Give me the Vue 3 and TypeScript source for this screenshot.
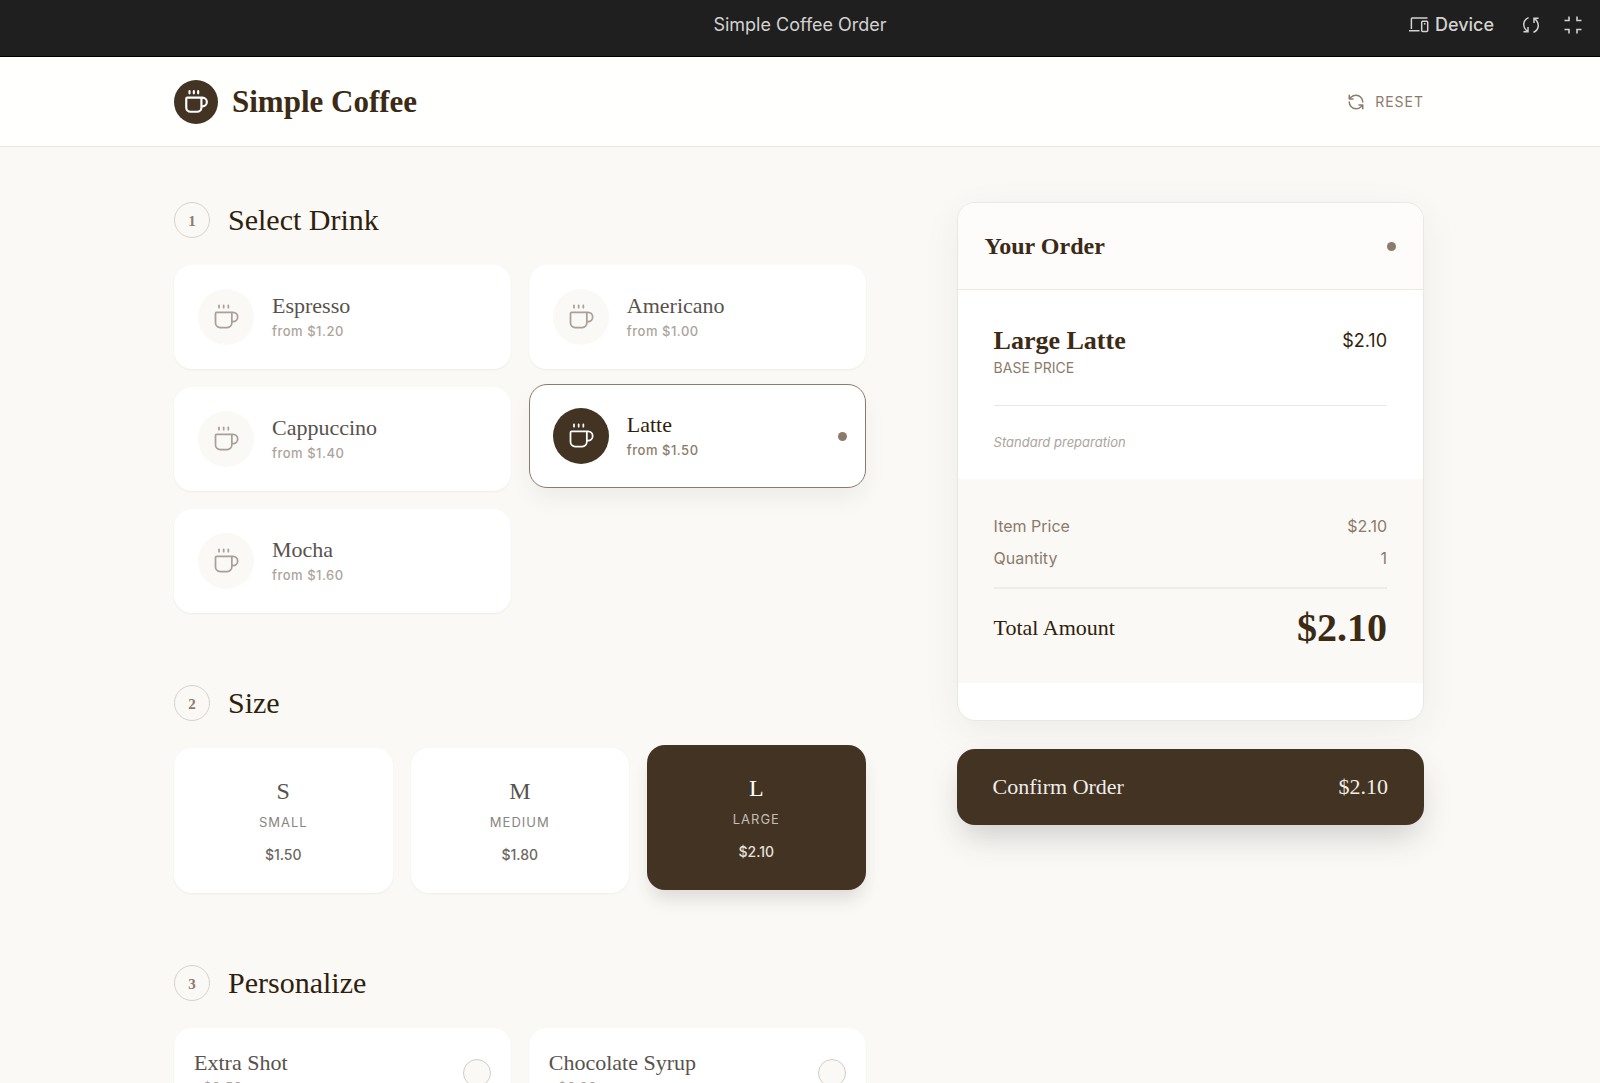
<script setup lang="ts">
import { computed, ref } from 'vue'

interface Drink { name: string; base: number }
interface Size { code: string; label: string; extra: number }
interface Extra { name: string; price: number }

const drinks: Drink[] = [
  { name: 'Espresso', base: 1.2 },
  { name: 'Americano', base: 1.0 },
  { name: 'Cappuccino', base: 1.4 },
  { name: 'Latte', base: 1.5 },
  { name: 'Mocha', base: 1.6 },
]
const sizes: Size[] = [
  { code: 'S', label: 'Small', extra: 0 },
  { code: 'M', label: 'Medium', extra: 0.3 },
  { code: 'L', label: 'Large', extra: 0.6 },
]
const extras: Extra[] = [
  { name: 'Extra Shot', price: 0.5 },
  { name: 'Chocolate Syrup', price: 0.3 },
]

const drink = ref<Drink>(drinks[3])
const size = ref<Size>(sizes[2])
const chosen = ref<string[]>([])
const quantity = ref(1)

const money = (n: number): string => '$' + n.toFixed(2)
const basePrice = computed(() => drink.value.base + size.value.extra)
const itemPrice = computed(() =>
  extras.filter((e) => chosen.value.includes(e.name)).reduce((sum, e) => sum + e.price, basePrice.value),
)
const total = computed(() => itemPrice.value * quantity.value)
const preparation = computed(() => (chosen.value.length ? chosen.value.join(', ') : 'Standard preparation'))

function reset(): void {
  drink.value = drinks[3]
  size.value = sizes[2]
  chosen.value = []
  quantity.value = 1
}
</script>

<template>
  <div class="window">
    <div class="toolbar">
      <span class="toolbar-title">Simple Coffee Order</span>
      <div class="toolbar-actions">
        <button type="button" class="tool device">
          <svg width="20" height="18" viewBox="0 0 20 18" fill="none" stroke="currentColor" stroke-width="1.5">
            <path d="M18.5 2H3.2Q2.4 2 2.4 2.8V13M0 14.8H10.5" />
            <rect x="12.7" y="5.2" width="6" height="10.2" rx="1" />
            <path d="M15.7 7v1.6" />
          </svg>
          <span>Device</span>
        </button>
        <button type="button" class="tool" aria-label="Reload">
          <svg width="18" height="18" viewBox="0 0 18 18" fill="none" stroke="currentColor" stroke-width="1.5">
            <path d="M6.6 1.6C.2 4.4.4 11.6 5.6 15.4M1.400 15.7H6V11M11.4 16.4C17.8 13.6 17.6 6.4 12.4 2.6M16.6 2.3H12V7" />
          </svg>
        </button>
        <button type="button" class="tool" aria-label="Exit full screen">
          <svg width="18" height="18" viewBox="0 0 18 18" fill="none" stroke="currentColor" stroke-width="1.6">
            <path d="M.5 4.500H5V.5M13 .5V4.500h4.500M.5 13.500H5v4M13 17.500V13.500h4.500" />
          </svg>
        </button>
      </div>
    </div>

    <div class="page">
      <header class="site-header">
        <div class="container header-row">
          <div class="brand">
            <span class="logo">
              <svg width="26" height="26" viewBox="0 0 24 24" class="cup bold"><path d="M17 8h1a4 4 0 1 1 0 8h-1M3 9a1 1 0 0 1 1-1h13v9a4 4 0 0 1-4 4H7a4 4 0 0 1-4-4ZM6 2v2M10 2v2M14 2v2" /></svg>
            </span>
            <h1>Simple Coffee</h1>
          </div>
          <button type="button" class="reset" @click="reset">
            <svg width="18" height="18" viewBox="0 0 24 24" fill="none" stroke="currentColor" stroke-width="2" stroke-linecap="round" stroke-linejoin="round">
              <path d="M21 12a9 9 0 0 0-9-9 9.75 9.75 0 0 0-6.74 2.74L3 8M3 3v5h5M3 12a9 9 0 0 0 9 9 9.75 9.75 0 0 0 6.74-2.74L21 16M16 16h5v5" />
            </svg>
            <span>RESET</span>
          </button>
        </div>
      </header>

      <main class="container layout">
        <div class="steps">
          <section>
            <div class="step-head"><span class="badge">1</span><h2>Select Drink</h2></div>
            <div class="grid two">
              <button
                v-for="d in drinks"
                :key="d.name"
                type="button"
                class="card drink"
                :class="{ active: d.name === drink.name }"
                :aria-pressed="d.name === drink.name"
                @click="drink = d"
              >
                <span class="disc">
                  <svg width="28" height="28" viewBox="0 0 24 24" class="cup"><path d="M17 8h1a4 4 0 1 1 0 8h-1M3 9a1 1 0 0 1 1-1h13v9a4 4 0 0 1-4 4H7a4 4 0 0 1-4-4ZM6 2v2M10 2v2M14 2v2" /></svg>
                </span>
                <span class="drink-text">
                  <span class="name">{{ d.name }}</span>
                  <span class="from">from {{ money(d.base) }}</span>
                </span>
                <span v-if="d.name === drink.name" class="dot"></span>
              </button>
            </div>
          </section>

          <section>
            <div class="step-head"><span class="badge">2</span><h2>Size</h2></div>
            <div class="grid three">
              <button
                v-for="s in sizes"
                :key="s.code"
                type="button"
                class="card size"
                :class="{ active: s.code === size.code }"
                :aria-pressed="s.code === size.code"
                @click="size = s"
              >
                <span class="code">{{ s.code }}</span>
                <span class="size-label">{{ s.label }}</span>
                <span class="size-price">{{ money(drink.base + s.extra) }}</span>
              </button>
            </div>
          </section>

          <section>
            <div class="step-head"><span class="badge">3</span><h2>Personalize</h2></div>
            <div class="grid two">
              <label v-for="e in extras" :key="e.name" class="card extra">
                <span class="extra-text">
                  <span class="name">{{ e.name }}</span>
                  <span class="extra-price">+{{ money(e.price) }}</span>
                </span>
                <input v-model="chosen" type="checkbox" :value="e.name" />
              </label>
            </div>
          </section>
        </div>

        <aside>
          <div class="order">
            <div class="order-head"><h3>Your Order</h3><span class="dot"></span></div>
            <div class="order-body">
              <div class="line">
                <div>
                  <div class="item">{{ size.label }} {{ drink.name }}</div>
                  <div class="base">BASE PRICE</div>
                </div>
                <span class="item-price">{{ money(basePrice) }}</span>
              </div>
              <p class="prep">{{ preparation }}</p>
            </div>
            <div class="totals">
              <div class="row"><span>Item Price</span><span>{{ money(itemPrice) }}</span></div>
              <div class="row"><span>Quantity</span><span>{{ quantity }}</span></div>
              <div class="total"><span>Total Amount</span><strong>{{ money(total) }}</strong></div>
            </div>
          </div>
          <button type="button" class="confirm"><span>Confirm Order</span><span>{{ money(total) }}</span></button>
        </aside>
      </main>
    </div>
  </div>
</template>

<style>
body {
  margin: 0;
}
</style>

<style scoped>
* {
  box-sizing: border-box;
}
.window {
  --serif: "Liberation Serif", serif;
  --brown: #433323;
  --ink: #2f1f0d;
  --taupe: #8c7b6b;
  --line: #ebe7e2;
  --paper: #faf9f6;
  height: 100vh;
  display: flex;
  flex-direction: column;
  font-family: Inter, sans-serif;
  color: var(--ink);
  background: var(--paper);
}
button {
  font: inherit;
  color: inherit;
  border: 0;
  padding: 0;
  background: none;
  cursor: pointer;
  text-align: left;
}
h1, h2, h3, p {
  margin: 0;
}
svg {
  display: block;
  flex: none;
}

.toolbar {
  flex: none;
  display: grid;
  grid-template-columns: 1fr auto 1fr;
  align-items: center;
  height: 57px;
  padding: 0 18px 6px;
  background: #1f1f1f;
  border-bottom: 1px solid #000;
  color: #d4d2d0;
  font-size: 18px;
  line-height: 24px;
}
.toolbar-title {
  grid-column: 2;
}
.toolbar-actions {
  justify-self: end;
  display: flex;
  align-items: center;
  gap: 24px;
}
.tool {
  display: flex;
  align-items: center;
}
.device {
  gap: 6px;
  margin-right: 4px;
  font-weight: 500;
}

.page {
  flex: 1;
  min-height: 0;
  overflow-y: auto;
  scrollbar-width: none;
}
.container {
  max-width: 1306px;
  margin: 0 auto;
  padding: 0 29px 0 27px;
}
.site-header {
  background: #fffffe;
  border-bottom: 1px solid var(--line);
}
.header-row {
  display: flex;
  align-items: center;
  justify-content: space-between;
  height: 89px;
}
.brand {
  display: flex;
  align-items: center;
  gap: 14px;
}
.logo {
  display: grid;
  place-items: center;
  width: 44px;
  height: 44px;
  border-radius: 50%;
  background: var(--brown);
  color: #fff;
}
.cup {
  fill: none;
  stroke: currentColor;
  stroke-width: 1.5;
  stroke-linecap: round;
  stroke-linejoin: round;
}
.cup.bold {
  stroke-width: 2;
}
h1 {
  font: 700 31px/36px var(--serif);
  color: #3c2a15;
}
.reset {
  display: flex;
  align-items: center;
  gap: 10px;
  color: var(--taupe);
  font-size: 14px;
  letter-spacing: 1px;
}

.layout {
  display: grid;
  grid-template-columns: 691fr 467fr;
  gap: 91px;
  align-items: start;
  padding-top: 55px;
  padding-bottom: 72px;
}
.steps {
  display: flex;
  flex-direction: column;
  gap: 72px;
}
.step-head {
  display: flex;
  align-items: center;
  gap: 18px;
  margin-bottom: 27px;
}
.badge {
  display: grid;
  place-items: center;
  width: 36px;
  height: 36px;
  padding-top: 2px;
  border: 1px solid #d8d1cc;
  border-radius: 50%;
  color: var(--taupe);
  font: 700 15px/16px var(--serif);
}
h2 {
  font: 400 30px/36px var(--serif);
}
.grid {
  display: grid;
  gap: 18px;
}
.two {
  grid-template-columns: 1fr 1fr;
}
.three {
  grid-template-columns: 1fr 1fr 1fr;
}
.card {
  background: #fff;
  border: 1px solid transparent;
  border-radius: 18px;
  box-shadow: 0 1px 2px rgba(60, 40, 20, 0.06);
}
.card.active {
  position: relative;
  top: -3px;
}
.drink {
  display: flex;
  align-items: center;
  gap: 18px;
  padding: 23px;
}
.drink.active {
  border-color: var(--taupe);
  box-shadow: 0 12px 24px -4px rgba(68, 51, 36, 0.08);
}
.disc {
  flex: none;
  display: grid;
  place-items: center;
  width: 56px;
  height: 56px;
  border-radius: 50%;
  background: var(--paper);
  color: #a8a099;
}
.active .disc {
  background: var(--brown);
  color: #fff;
}
.drink-text,
.extra-text {
  flex: 1;
  display: flex;
  flex-direction: column;
}
.name {
  font: 400 22px/28px var(--serif);
  color: #57524d;
}
.active .name {
  color: var(--ink);
}
.from {
  font-size: 13px;
  line-height: 22px;
  letter-spacing: 0.04em;
  font-weight: 500;
  color: #aca49d;
}
.active .from {
  color: var(--taupe);
}
.dot {
  flex: none;
  width: 9px;
  height: 9px;
  border-radius: 50%;
  background: var(--taupe);
}
.drink .dot {
  margin-right: -5px;
}

.size {
  display: flex;
  flex-direction: column;
  align-items: center;
  padding: 26px 0 25px;
  color: #57524d;
}
.code {
  font: 400 24px/32px var(--serif);
}
.size-label {
  margin-top: 2px;
  font-size: 13px;
  line-height: 26px;
  letter-spacing: 1px;
  text-transform: uppercase;
  color: #8a8580;
}
.size-price {
  margin-top: 8px;
  font-size: 14px;
  line-height: 24px;
  font-weight: 500;
  color: #6d6863;
}
.size.active {
  background: var(--brown);
  color: #fff;
  box-shadow: 0 12px 18px -4px rgba(68, 51, 50, 0.16);
}
.active .size-label {
  color: #c4bdb6;
}
.active .size-price {
  color: #e4e0dc;
}

.extra {
  display: flex;
  align-items: center;
  justify-content: space-between;
  padding: 20px 19px;
  cursor: pointer;
}
.extra-price {
  font-size: 13px;
  line-height: 20px;
  letter-spacing: 0.04em;
  font-weight: 500;
  color: #aca49d;
}
.extra input {
  appearance: none;
  width: 28px;
  height: 28px;
  margin: 0;
  border: 1px solid #d3cbc6;
  border-radius: 50%;
  background: var(--paper);
}
.extra input:checked {
  background: var(--brown);
}

.order {
  overflow: hidden;
  border: 1px solid var(--line);
  border-radius: 18px;
  background: #fff;
  padding-bottom: 37px;
  box-shadow: 0 10px 40px -4px rgba(68, 51, 36, 0.08);
}
.order-head {
  display: flex;
  align-items: center;
  justify-content: space-between;
  height: 87px;
  padding: 0 27px;
  background: #fdfcfb;
  border-bottom: 1px solid var(--line);
}
h3 {
  font: 700 24px/28px var(--serif);
  color: #3c2a15;
}
.order-body {
  padding: 36px 36px 25px;
}
.line {
  display: flex;
  justify-content: space-between;
  padding-bottom: 25px;
  border-bottom: 1px solid var(--line);
}
.item {
  font: 700 26px/30px var(--serif);
  color: #3c2a15;
}
.base {
  font-size: 14px;
  line-height: 24px;
  color: var(--taupe);
}
.item-price {
  font-size: 18px;
  line-height: 30px;
}
.prep {
  padding-top: 24px;
  font-size: 13px;
  line-height: 24px;
  font-style: italic;
  color: #aca49d;
}
.totals {
  padding: 31px 36px 30px;
  background: var(--paper);
}
.row {
  display: flex;
  justify-content: space-between;
  font-size: 16px;
  line-height: 32px;
  color: var(--taupe);
}
.total {
  display: flex;
  align-items: center;
  justify-content: space-between;
  margin-top: 13px;
  padding-top: 14px;
  border-top: 2px solid #efece8;
  font: 400 22px/50px var(--serif);
}
.total strong {
  font-size: 40px;
  color: #3c2a15;
}
.confirm {
  display: flex;
  align-items: center;
  justify-content: space-between;
  width: 100%;
  height: 76px;
  margin-top: 28px;
  padding: 0 36px;
  border-radius: 18px;
  background: var(--brown);
  color: #f0edea;
  font: 400 22px/28px var(--serif);
  box-shadow: 0 16px 32px -6px rgba(68, 60, 56, 0.24);
}
</style>
